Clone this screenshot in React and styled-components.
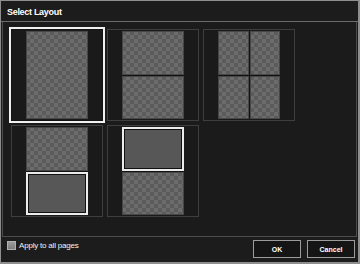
import React from 'react'
import styled, { createGlobalStyle } from 'styled-components'

const GlobalStyle = createGlobalStyle`
  html, body {
    margin: 0;
    padding: 0;
    background: #1b1b1b;
  }
  * { box-sizing: border-box; }
`

const layouts = [
  { cols: 1, rows: 2, cells: ['pic'] , single: true },
  { cols: 1, rows: 2, cells: ['pic', 'pic'] },
  { cols: 2, rows: 2, cells: ['pic', 'pic', 'pic', 'pic'] },
  { cols: 1, rows: 2, cells: ['pic', 'frame'] },
  { cols: 1, rows: 2, cells: ['frame', 'pic'] },
]

function App() {
  const selected = 0
  return (
    <>
      <GlobalStyle />
      <Dialog>
        <TitleBar>Select Layout</TitleBar>
        <Content>
          <Grid>
            {layouts.map((l, i) => (
              <Tile key={i} $selected={i === selected}>
                <Page $cols={l.cols} $rows={l.single ? 1 : l.rows}>
                  {l.cells.map((c, j) =>
                    c === 'frame' ? <Frame key={j} /> : <Checker key={j} />
                  )}
                </Page>
              </Tile>
            ))}
          </Grid>
        </Content>
        <Footer>
          <CheckLabel>
            <Box />
            Apply to all pages
          </CheckLabel>
          <Buttons>
            <Button>OK</Button>
            <Button>Cancel</Button>
          </Buttons>
        </Footer>
      </Dialog>
    </>
  )
}

const Dialog = styled.div`
  width: 360px;
  height: 264px;
  display: flex;
  flex-direction: column;
  background: #1b1b1b;
  border: 1px solid #8e8e8e;
  border-right-width: 2px;
  border-bottom-width: 2px;
  font-family: "Liberation Sans", Arial, sans-serif;
  color: #fff;
`

const TitleBar = styled.div`
  height: 21px;
  flex: none;
  display: flex;
  align-items: center;
  padding: 1px 0 0 6px;
  font-size: 9px;
  font-weight: bold;
  letter-spacing: -0.3px;
  border-bottom: 1px solid #6c6c6c;
  background: #1c1c1c;
`

const Content = styled.div`
  height: 215px;
  flex: none;
  margin: 0 1px;
  padding: 7px 0 0 8px;
  border: 1px solid #4c4c4c;
  border-top: none;
  background: #1b1b1b;
`

const Grid = styled.div`
  display: grid;
  grid-template-columns: repeat(3, 92px);
  grid-auto-rows: 92px;
  gap: 4px;
`

const Tile = styled.div`
  display: flex;
  align-items: center;
  justify-content: center;
  background: #1a1a1a;
  border: 1px solid ${p => (p.$selected ? '#141414' : '#3e3e3e')};
  outline: ${p => (p.$selected ? '2px solid #f0f0f0' : 'none')};
`

const Page = styled.div`
  width: 62px;
  height: 88px;
  display: grid;
  grid-template-columns: repeat(${p => p.$cols}, 1fr);
  grid-template-rows: repeat(${p => p.$rows}, 1fr);
  gap: 1px;
  background: #121212;
`

const Checker = styled.div`
  background-color: #626262;
  background-image: conic-gradient(#6c6c6c 25%, #5b5b5b 0 50%, #6c6c6c 0 75%, #5b5b5b 0);
  background-size: 8px 8px;
  box-shadow: inset 0 0 0 1px #474747;
`

const Frame = styled.div`
  background: #575757;
  border: 2px solid #ececec;
  box-shadow: inset 0 0 0 1px #111;
`

const Footer = styled.div`
  flex: 1;
  display: flex;
  align-items: flex-start;
  justify-content: space-between;
  padding: 3px 3px 0 6px;
  background: #1c1c1c;
`

const CheckLabel = styled.label`
  display: flex;
  align-items: center;
  gap: 3px;
  margin-top: 1px;
  font-size: 8px;
  letter-spacing: -0.2px;
  color: #f2f2f2;
`

const Box = styled.span`
  width: 9px;
  height: 9px;
  background: linear-gradient(#9a9a9a, #7c7c7c);
  border: 1px solid #b0b0b0;
`

const Buttons = styled.div`
  display: flex;
  gap: 6px;
`

const Button = styled.button`
  width: 48px;
  height: 18px;
  padding: 0;
  background: #151515;
  border: 1px solid #9c9c9c;
  color: #fff;
  font-family: "Liberation Sans", Arial, sans-serif;
  font-size: 7px;
  font-weight: bold;
`

export default App
